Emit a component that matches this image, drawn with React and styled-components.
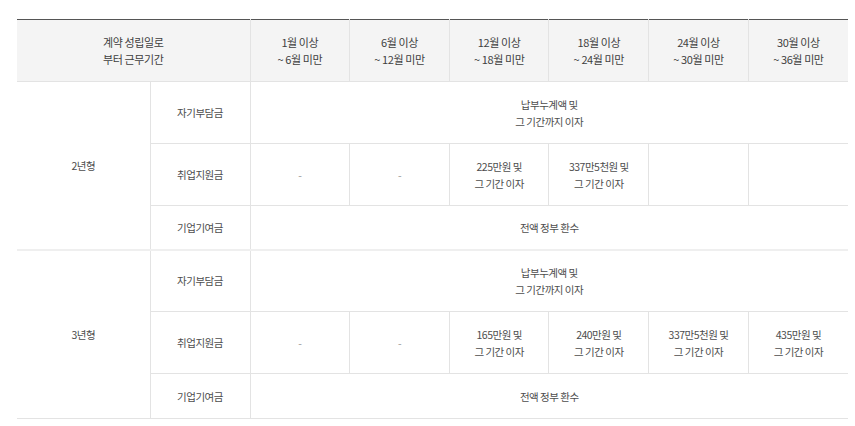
import React from "react";
import styled, { createGlobalStyle } from "styled-components";

const GlobalStyle = createGlobalStyle`
  body {
    margin: 0;
    background: #fff;
    font-family: "Noto Sans CJK KR", "Noto Sans", sans-serif;
  }
`;

const Wrap = styled.div`
  padding: 19px 7px 0 17px;
`;

const Table = styled.table`
  width: 100%;
  border-collapse: collapse;
  table-layout: fixed;
  border-top: 1px solid #555;
  border-bottom: 1px solid #e3e3e3;
`;

const Th = styled.th`
  height: 61px;
  padding: 0;
  background: #f4f4f4;
  color: #3f3f3f;
  font-size: 11px;
  font-weight: 400;
  line-height: 17px;
  letter-spacing: -0.4px;
  text-align: center;
  vertical-align: middle;
  border-bottom: 1px solid #e3e3e3;
  border-left: ${(p) => (p.$first ? "none" : "1px solid #e3e3e3")};
`;

const Tr = styled.tr`
  height: ${(p) => p.$h}px;
  border-top: ${(p) => (p.$group ? "2px solid #efefef" : "none")};
`;

const Td = styled.td`
  padding: 0;
  color: ${(p) => (p.$dim ? "#999" : "#4d4d4d")};
  font-size: 10.5px;
  line-height: 17px;
  letter-spacing: -0.5px;
  text-align: center;
  vertical-align: middle;
  border-bottom: 1px solid #e3e3e3;
  border-left: ${(p) => (p.$first ? "none" : "1px solid #e3e3e3")};
`;

const periods = [
  ["1월 이상", "~ 6월 미만"],
  ["6월 이상", "~ 12월 미만"],
  ["12월 이상", "~ 18월 미만"],
  ["18월 이상", "~ 24월 미만"],
  ["24월 이상", "~ 30월 미만"],
  ["30월 이상", "~ 36월 미만"],
];

const plans = [
  {
    name: "2년형",
    support: [
      null,
      null,
      ["225만원 및", "그 기간 이자"],
      ["337만5천원 및", "그 기간 이자"],
      "",
      "",
    ],
  },
  {
    name: "3년형",
    support: [
      null,
      null,
      ["165만원 및", "그 기간 이자"],
      ["240만원 및", "그 기간 이자"],
      ["337만5천원 및", "그 기간 이자"],
      ["435만원 및", "그 기간 이자"],
    ],
  },
];

const Lines = ({ lines }) => (
  <>
    {lines[0]}
    <br />
    {lines[1]}
  </>
);

const App = () => {
  return (
    <>
      <GlobalStyle />
      <Wrap>
        <Table>
          <colgroup>
            <col style={{ width: 133 }} />
            <col style={{ width: 100 }} />
            {periods.map((_, i) => (
              <col key={i} />
            ))}
          </colgroup>
          <thead>
            <tr>
              <Th colSpan={2} $first>
                계약 성립일로
                <br />
                부터 근무기간
              </Th>
              {periods.map((p, i) => (
                <Th key={i}>
                  <Lines lines={p} />
                </Th>
              ))}
            </tr>
          </thead>
          <tbody>
            {plans.map((plan, pi) => (
              <React.Fragment key={plan.name}>
                <Tr $group={pi > 0} $h={62}>
                  <Td rowSpan={3} $first>
                    {plan.name}
                  </Td>
                  <Td>자기부담금</Td>
                  <Td colSpan={6}>
                    납부누계액 및
                    <br />
                    그 기간까지 이자
                  </Td>
                </Tr>
                <Tr $h={62}>
                  <Td>취업지원금</Td>
                  {plan.support.map((s, i) =>
                    s === null ? (
                      <Td key={i} $dim>
                        -
                      </Td>
                    ) : (
                      <Td key={i}>{s ? <Lines lines={s} /> : null}</Td>
                    )
                  )}
                </Tr>
                <Tr $h={pi === plans.length - 1 ? 45 : 44}>
                  <Td>기업기여금</Td>
                  <Td colSpan={6}>전액 정부 환수</Td>
                </Tr>
              </React.Fragment>
            ))}
          </tbody>
        </Table>
      </Wrap>
    </>
  );
};

export default App;
